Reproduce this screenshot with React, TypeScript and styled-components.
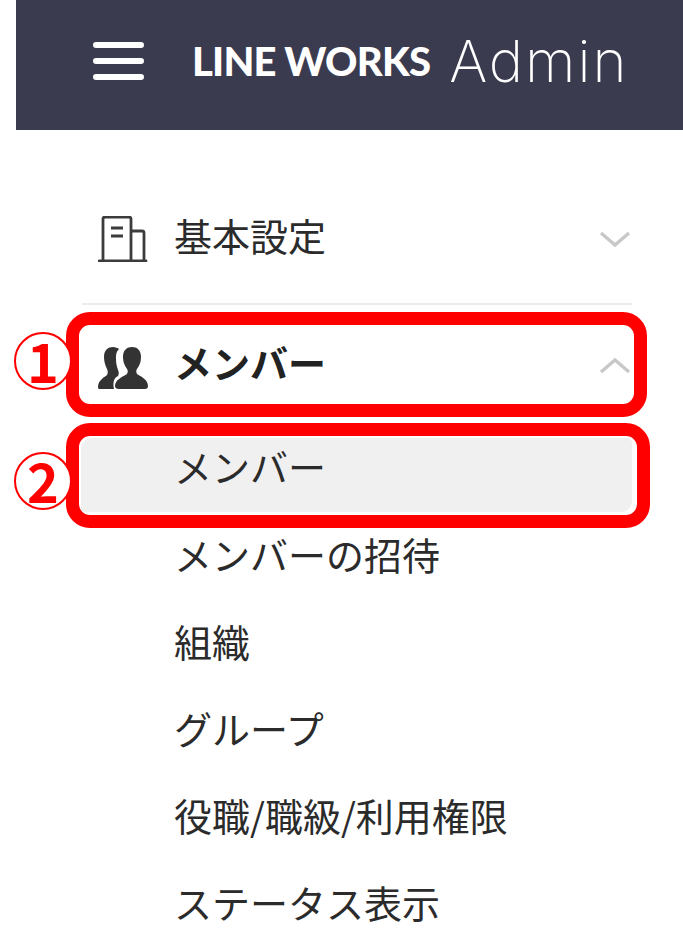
import React from "react";
import styled, { createGlobalStyle } from "styled-components";

const Global = createGlobalStyle`
  html, body {
    margin: 0;
    padding: 0;
    background: #fff;
    overflow: hidden;
  }
`;

const Page = styled.div`
  position: relative;
  width: 683px;
  height: 948px;
  overflow: hidden;
  font-family: "Noto Sans CJK JP", "Noto Sans", sans-serif;
  color: #2b2b2b;
`;

const Header = styled.header`
  height: 130px;
  margin-left: 16px;
  padding-left: 77px;
  box-sizing: border-box;
  background: #3b3b50;
  display: flex;
  align-items: center;
  color: #fff;
`;

const Burger = styled.div`
  width: 51px;
  height: 38px;
  margin: -8px 49px 0 0;
  display: flex;
  flex-direction: column;
  justify-content: space-between;
`;

const BurgerLine = styled.span`
  height: 6px;
  border-radius: 3px;
  background: #fff;
`;

const Logo = styled.span`
  font-family: Lato, sans-serif;
  font-weight: 900;
  font-size: 40px;
  letter-spacing: -0.8px;
  line-height: 1;
  margin: -8px 19px 0 -1px;
`;

const Admin = styled.span`
  font-family: Inter, sans-serif;
  font-weight: 200;
  font-size: 58px;
  letter-spacing: 2px;
  line-height: 1;
  margin-top: -8px;
`;

const Nav = styled.nav`
  margin: 65px 0 0 82px;
  width: 550px;
`;

const Row = styled.div<{ $bold?: boolean }>`
  height: 86px;
  display: flex;
  align-items: center;
  font-size: 38px;
  line-height: 1;
  font-weight: ${(p) => (p.$bold ? 700 : 400)};
  color: ${(p) => (p.$bold ? "#222" : "#2b2b2b")};
`;

const MemberRow = styled(Row)`
  margin-top: 17px;
`;

const SubRow = styled(Row)`
  height: 87px;
`;

const IconSlot = styled.span<{ $drop: number }>`
  width: 92px;
  padding: ${(p) => p.$drop}px 0 0 16px;
  box-sizing: border-box;
  display: flex;
  flex: none;
`;

const Label = styled.span`
  flex: 1;
  margin-top: -6px;
`;

const SubLabel = styled.span`
  padding-left: 92px;
  margin-top: -6px;
`;

const Divider = styled.div`
  height: 2px;
  margin-top: 22px;
  background: #ebebeb;
`;

const Chevron = styled.svg`
  width: 32px;
  height: 18px;
  flex: none;
  margin: 2px 1px 0 0;
`;

const SubList = styled.div`
  margin-top: 18px;
`;

const Highlight = styled.div`
  position: absolute;
  box-sizing: border-box;
  border: 13px solid #ff0000;
  border-radius: 24px;
`;

const SelectedBg = styled(Highlight)`
  left: 66px;
  top: 423px;
  width: 584px;
  height: 105px;
  background: #f0f0f0;
  box-shadow: inset -5px -3px 0 #fff, inset 2px 2px 0 #fff;
`;

const SelectedText = styled.span`
  position: absolute;
  left: 174px;
  top: 445px;
  font-size: 38px;
  line-height: 42px;
  color: #2b2b2b;
`;

const MemberBox = styled(Highlight)`
  left: 66px;
  top: 312px;
  width: 581px;
  height: 105px;
`;

const Badge = styled.span<{ $top: number }>`
  position: absolute;
  left: 14px;
  top: ${(p) => p.$top}px;
  width: 58px;
  height: 58px;
  box-sizing: border-box;
  border: 2px solid #ff0000;
  border-radius: 50%;
  background: #fff;
  color: #ff0000;
  font-weight: 700;
  font-size: 54px;
  line-height: 52px;
  text-align: center;
`;

const Down = () => (
  <Chevron viewBox="0 0 32 18">
    <path d="M2 3 L16 15 L30 3" fill="none" stroke="#c8c8c8" strokeWidth="3.4" />
  </Chevron>
);

const Up = () => (
  <Chevron viewBox="0 0 32 18">
    <path d="M2 15 L16 3 L30 15" fill="none" stroke="#c8c8c8" strokeWidth="3.4" />
  </Chevron>
);

const BuildingIcon = () => (
  <svg width="50" height="46" viewBox="0 0 50 46" fill="none" stroke="#3c3c3c" strokeWidth="2.8">
    <path d="M1 45 H48" strokeLinecap="round" />
    <path d="M5 45 V3 Q5 1 7 1 H31 Q33 1 33 3 V45" />
    <path d="M33 15 H44 Q46 15 46 17 V45" />
    <path d="M13 12 H25 M13 20 H25" />
  </svg>
);

const MembersIcon = () => (
  <svg width="50" height="44" viewBox="0 0 50 44" fill="#333">
    <path d="M16 43 H1 Q0 43 0 41 C0 35 5 32 9 29 C10 27 10 25 9 23 C7 19 6 15 6 11 C6 4 10 1 15 1 C17 1 20 2 21 3 C18 6 18 9 18 13 C18 18 19 21 20 24 C21 26 21 28 20 30 C15 32 15 38 16 43 Z" />
    <path d="M21 43 Q17 43 17 40 C17 34 24 31 29 28 C30 26 30 24 29 23 C26 19 25 15 25 11 C25 4 29 1 34 1 C39 1 43 4 43 11 C43 15 42 19 39 23 C38 24 38 26 39 28 C44 31 50 34 50 40 Q50 43 47 43 Z" />
  </svg>
);

const subItems = ["メンバーの招待", "組織", "グループ", "役職/職級/利用権限", "ステータス表示"];

export default function App() {
  return (
    <Page>
      <Global />
      <Header>
        <Burger>
          <BurgerLine />
          <BurgerLine />
          <BurgerLine />
        </Burger>
        <Logo>LINE WORKS</Logo>
        <Admin>Admin</Admin>
      </Header>
      <Nav>
        <Row>
          <IconSlot $drop={2}>
            <BuildingIcon />
          </IconSlot>
          <Label>基本設定</Label>
          <Down />
        </Row>
        <Divider />
        <MemberRow $bold>
          <IconSlot $drop={6}>
            <MembersIcon />
          </IconSlot>
          <Label>メンバー</Label>
          <Up />
        </MemberRow>
        <SubList>
          <SubRow />
          {subItems.map((item) => (
            <SubRow key={item}>
              <SubLabel>{item}</SubLabel>
            </SubRow>
          ))}
        </SubList>
      </Nav>
      <SelectedBg />
      <SelectedText>メンバー</SelectedText>
      <MemberBox />
      <Badge $top={332}>1</Badge>
      <Badge $top={452}>2</Badge>
    </Page>
  );
}
